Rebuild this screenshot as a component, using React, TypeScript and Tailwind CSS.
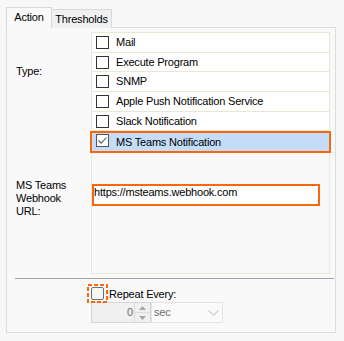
import React from "react";

function Box({ checked, className = "" }: { checked?: boolean; className?: string }) {
  return (
    <span
      className={
        "w-[13px] h-[13px] border border-[#333333] bg-white flex items-center justify-center shrink-0 " +
        className
      }
    >
      {checked && (
        <svg width="11" height="11" viewBox="0 0 11 11">
          <path d="M1.5 5.5 L4.2 8.2 L9.5 2.5" fill="none" stroke="#5a5a5a" strokeWidth="1.1" />
        </svg>
      )}
    </span>
  );
}

const items: { label: string; h: string }[] = [
  { label: "Mail", h: "h-[20px]" },
  { label: "Execute Program", h: "h-[19px]" },
  { label: "SNMP", h: "h-[20px]" },
  { label: "Apple Push Notification Service", h: "h-[20px]" },
  { label: "Slack Notification", h: "h-[19px]" },
];

export default function App() {
  return (
    <div className="w-[344px] h-[341px] bg-[#f7f7f7] text-[11px] leading-[13px] tracking-[-0.2px] text-black overflow-hidden font-['Liberation_Sans',Arial,sans-serif]">
      {/* Tabs */}
      <div className="flex items-end pl-[6px] pt-[7px] h-[28px]">
        <div className="relative z-10 w-[46px] h-[21px] border border-b-0 border-[#d9d9d9] bg-[#f9f9f9] flex justify-center pt-[3px]">
          Action
        </div>
        <div className="w-[60px] h-[19px] border border-l-0 border-b-0 border-[#d9d9d9] bg-[#f0f0f0] flex justify-center pt-[3px]">
          Thresholds
        </div>
      </div>

      {/* Panel */}
      <div className="ml-[6px] mt-[-1px] w-[330px] h-[306px] border border-[#dcdcdc] bg-[#f9f9f9] pt-[4px]">
        <div className="flex">
          <div className="w-[84px] pl-[9px]">
            <div className="mt-[33px]">Type:</div>
            <div className="mt-[101px]">
              MS Teams
              <br />
              Webhook
              <br />
              URL:
            </div>
          </div>
          <div className="w-[239px] h-[242px] border border-[#ebe7d6]">
            <div className="flex flex-col">
              {items.map((it) => (
                <div
                  key={it.label}
                  className={"flex items-center bg-white border-b border-[#ebe7d6] pl-[4px] " + it.h}
                >
                  <Box />
                  <span className="ml-[7px] whitespace-nowrap">{it.label}</span>
                </div>
              ))}
              <div className="flex items-center h-[22px] -mx-[2px] border-2 border-[#f7670c] bg-[#c4dcf8] pl-[4px]">
                <Box checked className="self-start mt-[1px] border-[#555555] bg-[#f4f4f4]" />
                <span className="ml-[7px] whitespace-nowrap">MS Teams Notification</span>
              </div>
            </div>
            <div className="mt-[31px] w-[228px] h-[22px] border-2 border-[#f7670c] bg-white whitespace-nowrap">
              https://msteams.webhook.com
            </div>
          </div>
        </div>

        <div className="mt-[4px] ml-[8px] w-[319px] h-[1px] bg-[#a0a0a0]" />

        <div className="flex items-center mt-[5px] ml-[80px]">
          <div className="relative w-[21px] h-[19px] flex items-center justify-center">
            <span className="w-[13px] h-[13px] rounded-[2px] border border-[#707070] bg-[#f6f6f6]" />
            <svg className="absolute inset-0" width="21" height="19" viewBox="0 0 21 19">
              <rect
                x="1"
                y="1"
                width="19"
                height="17"
                fill="none"
                stroke="#f7670c"
                strokeWidth="2"
                strokeDasharray="4 2"
              />
            </svg>
          </div>
          <span className="ml-[1px] pt-[2px] whitespace-nowrap">Repeat Every:</span>
        </div>

        <div className="flex mt-[-1px] ml-[84px]">
          <div className="w-[60px] h-[21px] border border-[#d6d6d6] bg-[#f0f0f0] flex">
            <div className="flex-1 flex items-center justify-end pr-[1px] text-[#6d6d6d]">0</div>
            <div className="w-[16px] flex flex-col border-l border-[#dcdcdc]">
              <div className="flex-1 flex items-center justify-center border-b border-[#dcdcdc]">
                <svg width="7" height="4" viewBox="0 0 7 4">
                  <path d="M0 4 L3.5 0 L7 4 Z" fill="#a8a8a8" />
                </svg>
              </div>
              <div className="flex-1 flex items-center justify-center">
                <svg width="7" height="4" viewBox="0 0 7 4">
                  <path d="M0 0 L3.5 4 L7 0 Z" fill="#a8a8a8" />
                </svg>
              </div>
            </div>
          </div>
          <div className="w-[72px] h-[21px] border border-[#e3e3e3] bg-[#fafafa] flex items-center justify-between pl-[2px] pr-[3px] text-[#6d6d6d]">
            <span>sec</span>
            <svg width="11" height="6" viewBox="0 0 11 6">
              <path d="M0.5 0.5 L5.5 5 L10.5 0.5" fill="none" stroke="#b5b5b5" strokeWidth="1" />
            </svg>
          </div>
        </div>
      </div>
    </div>
  );
}
